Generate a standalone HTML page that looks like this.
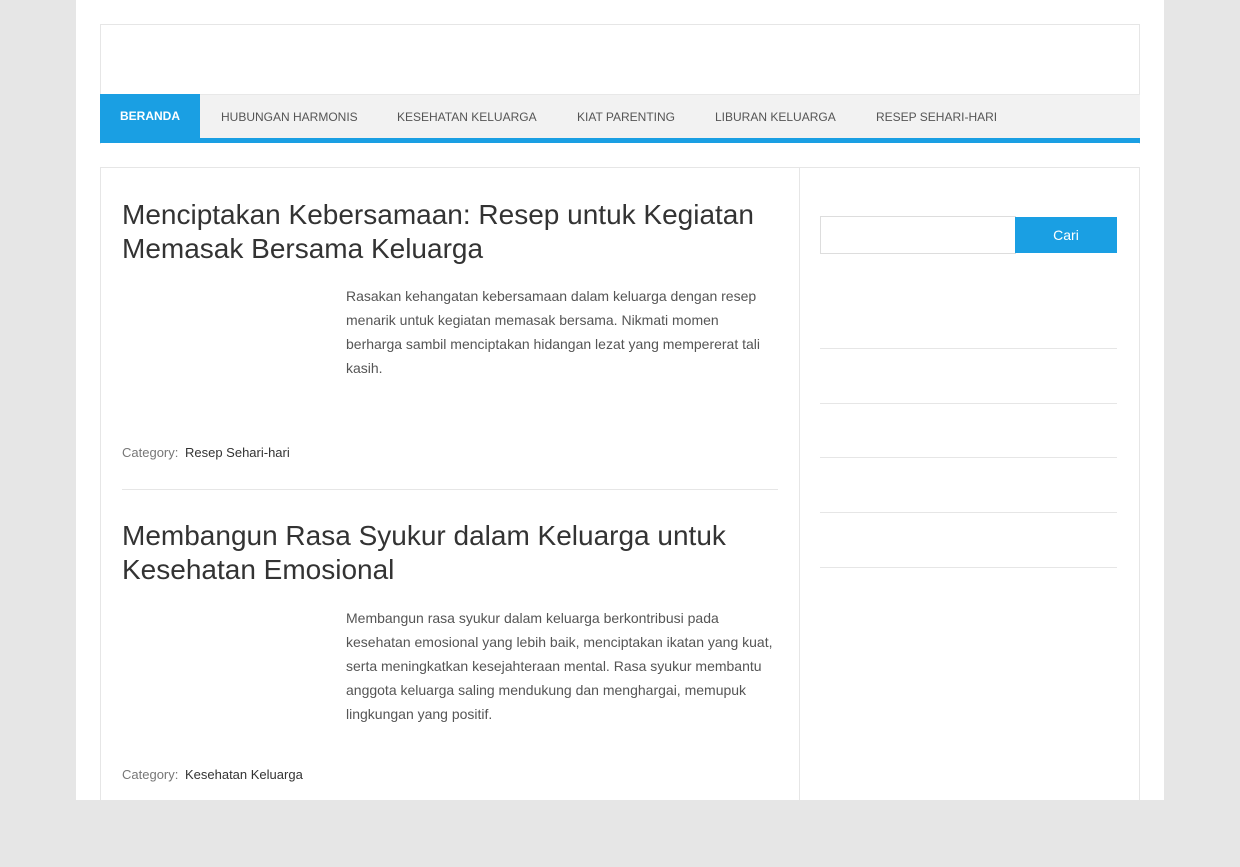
<!DOCTYPE html>
<html><head><meta charset="utf-8"><style>
*{margin:0;padding:0;box-sizing:border-box}
body{background:#e6e6e6;font-family:"Liberation Sans",Arial,sans-serif;width:1240px;height:800px;overflow:hidden;position:relative}
.wrap{position:absolute;left:76px;top:0;width:1088px;height:800px;background:#fff}
.hdr{position:absolute;left:100px;top:24px;width:1040px;height:120px;border:1px solid #e6e6e6;border-bottom:none;background:#fff}
.nav{position:absolute;left:100px;top:94px;width:1040px;height:44px;background:#f2f2f2;border-top:1px solid #e8e8e8}
.nav a{position:absolute;top:0;height:44px;line-height:44px;font-size:12px;color:#555;text-decoration:none}
.nav a.on{background:#1a9fe3;color:#fff;font-weight:bold;padding:0 20px;left:0;top:-1px;height:45px}
.bar{position:absolute;left:100px;top:138px;width:1040px;height:5px;background:#1a9fe3}
.main{position:absolute;left:100px;top:167px;width:1040px;height:700px;border:1px solid #e6e6e6}
.side{position:absolute;left:799px;top:167px;width:1px;height:700px;background:#e6e6e6}
h2{position:absolute;left:122px;font-weight:normal;font-size:28px;line-height:34px;color:#333;width:660px}
.ex{position:absolute;left:346px;width:430px;font-size:14px;line-height:24px;color:#555}
.cat{position:absolute;left:122px;font-size:13px;color:#777}
.cat span{color:#333;margin-left:3px}
.hr{position:absolute;left:122px;width:656px;height:1px;background:#e6e6e6}
.inp{position:absolute;left:820px;top:216px;width:196px;height:38px;border:1px solid #ddd}
.btn{position:absolute;left:1015px;top:217px;width:102px;height:36px;background:#1a9fe3;color:#fff;font-size:14px;text-align:center;line-height:36px}
.sl{position:absolute;left:820px;width:297px;height:1px;background:#e6e6e6}
</style></head><body>
<div class="wrap"></div>
<div class="hdr"></div>
<div class="nav">
<a class="on">BERANDA</a>
<a style="left:121px">HUBUNGAN HARMONIS</a>
<a style="left:297px">KESEHATAN KELUARGA</a>
<a style="left:477px">KIAT PARENTING</a>
<a style="left:615px">LIBURAN KELUARGA</a>
<a style="left:776px">RESEP SEHARI-HARI</a>
</div>
<div class="bar"></div>
<div class="main"></div>
<div class="side"></div>
<h2 style="top:198px">Menciptakan Kebersamaan: Resep untuk Kegiatan Memasak Bersama Keluarga</h2>
<div class="ex" style="top:284px">Rasakan kehangatan kebersamaan dalam keluarga dengan resep menarik untuk kegiatan memasak bersama. Nikmati momen berharga sambil menciptakan hidangan lezat yang mempererat tali kasih.</div>
<div class="cat" style="top:445px">Category: <span>Resep Sehari-hari</span></div>
<div class="hr" style="top:489px"></div>
<h2 style="top:519px">Membangun Rasa Syukur dalam Keluarga untuk Kesehatan Emosional</h2>
<div class="ex" style="top:606px">Membangun rasa syukur dalam keluarga berkontribusi pada kesehatan emosional yang lebih baik, menciptakan ikatan yang kuat, serta meningkatkan kesejahteraan mental. Rasa syukur membantu anggota keluarga saling mendukung dan menghargai, memupuk lingkungan yang positif.</div>
<div class="cat" style="top:767px">Category: <span>Kesehatan Keluarga</span></div>
<div class="inp"></div>
<div class="btn">Cari</div>
<div class="sl" style="top:348px"></div>
<div class="sl" style="top:403px"></div>
<div class="sl" style="top:457px"></div>
<div class="sl" style="top:512px"></div>
<div class="sl" style="top:567px"></div>
</body></html>
